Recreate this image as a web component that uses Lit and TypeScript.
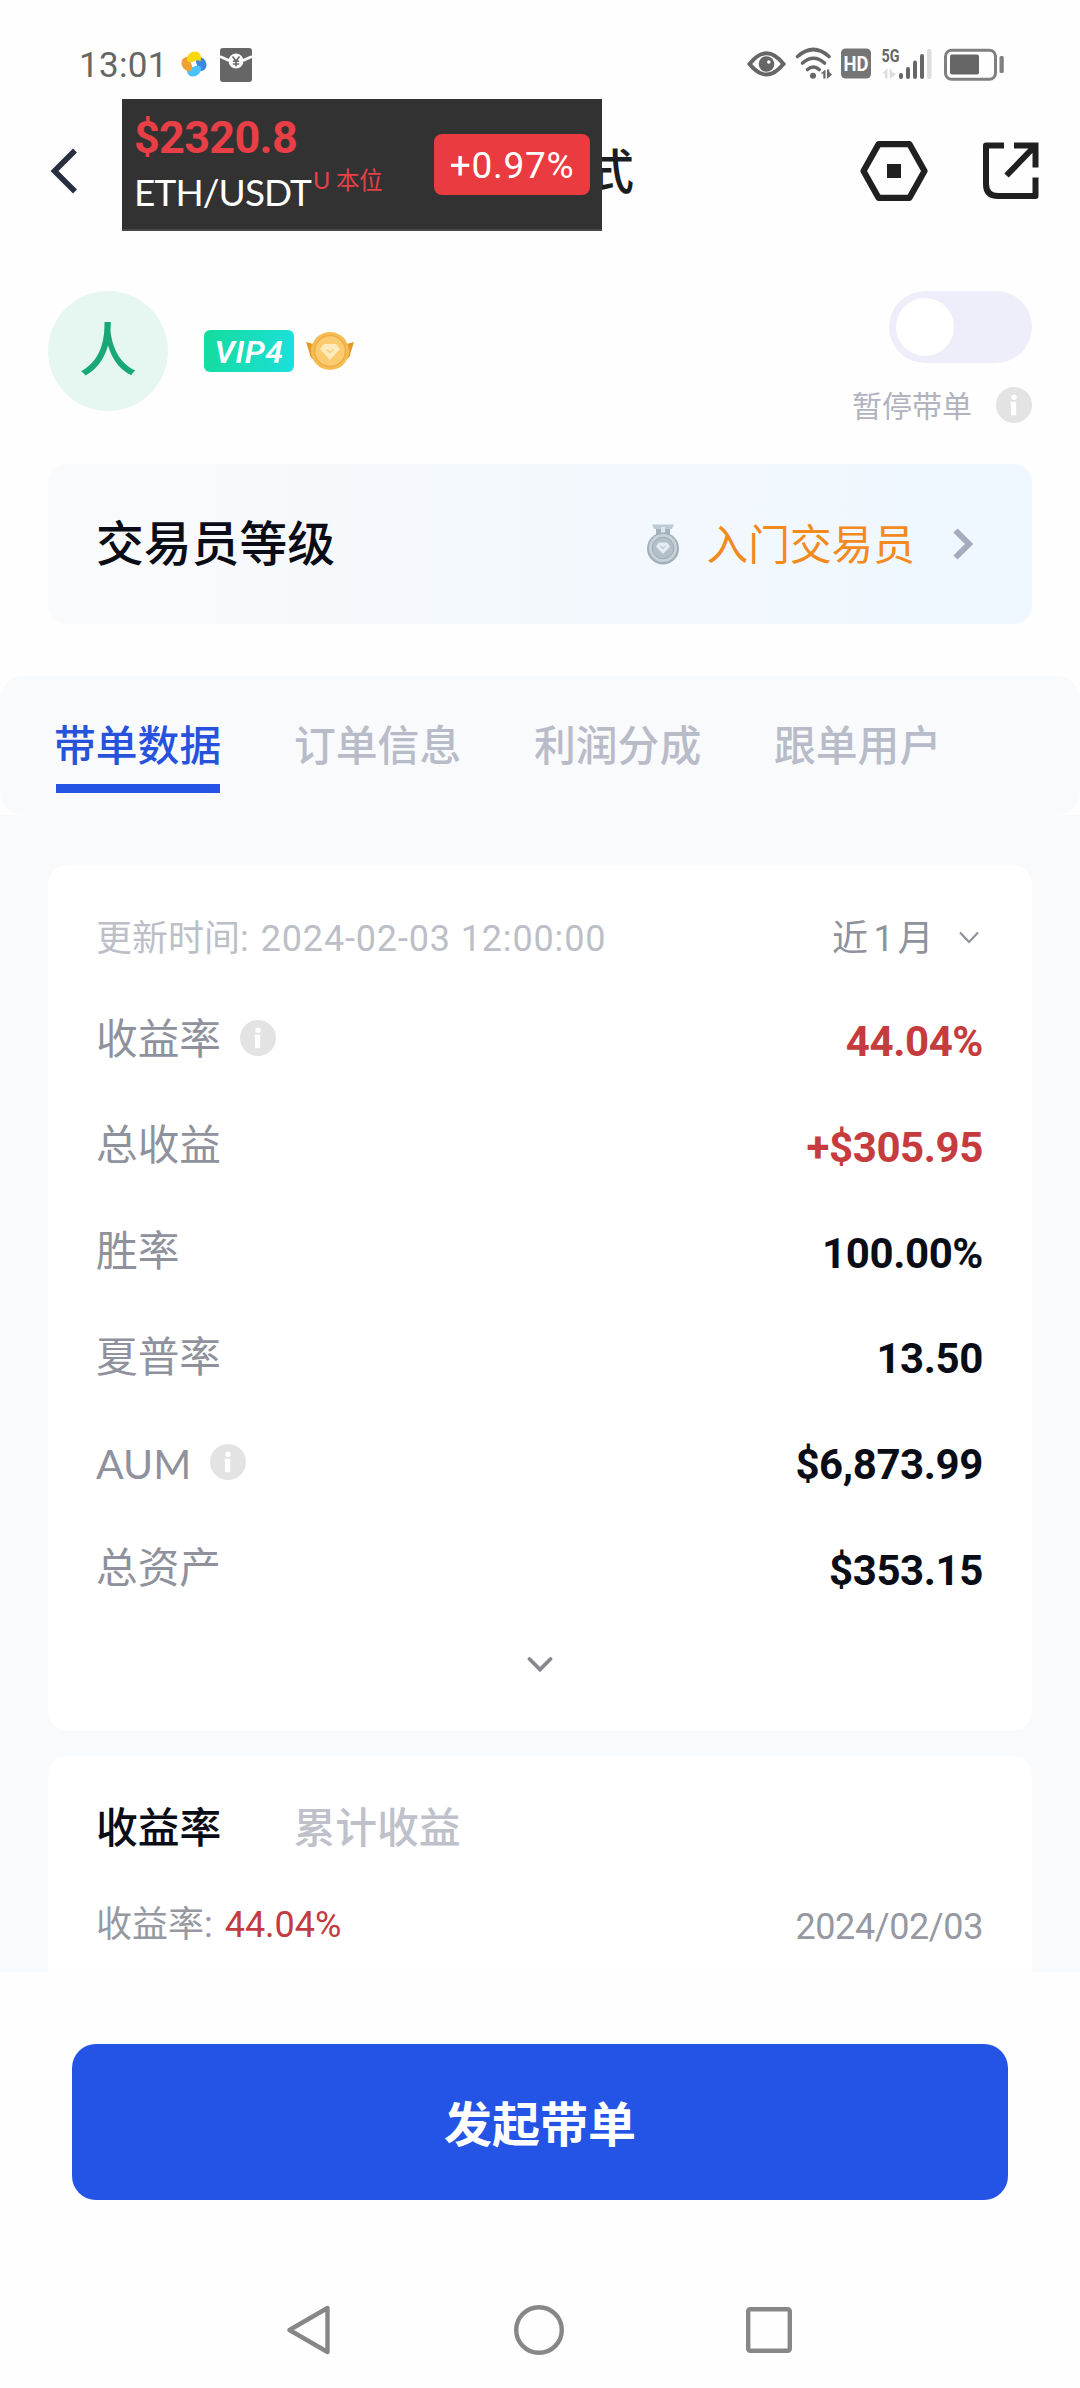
import { LitElement, html, css, svg } from "lit";
import { customElement, property } from "lit/decorators.js";

interface Metric {
  label: string;
  value: string;
  info?: boolean;
  up?: boolean;
  latin?: boolean;
}

const METRICS: Metric[] = [
  { label: "收益率", value: "44.04%", info: true, up: true },
  { label: "总收益", value: "+$305.95", up: true },
  { label: "胜率", value: "100.00%" },
  { label: "夏普率", value: "13.50" },
  { label: "AUM", value: "$6,873.99", info: true, latin: true },
  { label: "总资产", value: "$353.15" },
];

const TABS = ["带单数据", "订单信息", "利润分成", "跟单用户"];

const infoIcon = html`<svg class="info" width="36" height="36" viewBox="0 0 36 36">
  <circle cx="18" cy="18" r="18" fill="#e3e3e4" />
  <circle cx="18" cy="10.3" r="2.7" fill="#fff" />
  <path d="M14.6 14.8h5.6v13.4h-5.2V17.4h-.4z" fill="#fff" />
</svg>`;

@customElement("status-bar")
class StatusBar extends LitElement {
  static styles = css`
    :host {
      display: block;
    }
    .bar {
      display: flex;
      align-items: center;
      height: 40px;
      padding: 44px 76px 0 79px;
      color: #666;
      font-family: Roboto, "Liberation Sans", sans-serif;
    }
    .time {
      width: 101px;
      padding-top: 3px;
      font-size: 35px;
      letter-spacing: 0.3px;
    }
    .notes {
      flex: 1;
    }
    svg {
      display: block;
    }
  `;

  render() {
    const petal = (color: string, angle: number) =>
      svg`<path d="M-7 -3C-8 -8 -3.500 -12.800 1.500 -12.500C6.500 -12 8 -7.500 6.500 -2.500C4.500 -4.200 2.500 -3.800 .5 -2.800C-2 -1.600 -5 -1.200 -7 -3Z" fill=${color} transform="rotate(${angle})"/>`;
    return html`<div class="bar">
      <span class="time">13:01</span>
      <svg class="notes" height="40" viewBox="0 0 560 40" preserveAspectRatio="xMinYMid meet">
        <g transform="translate(14 20)">
          ${petal("#3c86e8", 90)} ${petal("#4cc0fb", 180)} ${petal("#f0a032", 270)} ${petal("#fbd60c", 0)}
        </g>
        <rect x="40" y="4" width="32" height="34" rx="3" fill="#666" />
        <path d="M40 12.500L49 16.500M72 12.500L63 16.500" stroke="#fff" stroke-width="3" fill="none" />
        <circle cx="56" cy="17" r="7.500" fill="#fff" />
        <path d="M52.500 12.500L56 17L59.500 12.500M56 17V22.500M52.800 17.300H59.200M52.800 20H59.200" stroke="#666" stroke-width="1.600" fill="none" />
      </svg>
      <svg width="257" height="40" viewBox="747 44 257 40" fill="none">
        <path d="M749.500 64Q766.500 42.500 783.500 64Q766.500 85 749.500 64Z" stroke="#666" stroke-width="4" />
        <circle cx="766.500" cy="64" r="7.800" fill="#666" />
        <circle cx="768.800" cy="62" r="1.800" fill="#fff" />
        <g stroke="#666" stroke-width="3.600" stroke-linecap="round">
          <path d="M797.500 56.500Q813.500 42.500 829 56.500" />
          <path d="M802.500 63Q813.500 53.500 824.500 63" />
          <path d="M807.500 69.500Q813.300 64.500 819.200 69.500" />
        </g>
        <circle cx="813" cy="75.700" r="3" fill="#666" />
        <path d="M820.500 73.500L825.500 69.500V78.500H823.300V73.500ZM827 69.500H829.200V72L832 74.500L827 79Z" fill="#666" />
        <rect x="841" y="48.500" width="30" height="30" rx="4.500" fill="#757575" />
        <text x="843.500" y="70.800" font-size="21" font-weight="700" fill="#fff" textLength="25" lengthAdjust="spacingAndGlyphs">HD</text>
        <text x="881.500" y="62" font-size="18.500" font-weight="700" fill="#666" textLength="18" lengthAdjust="spacingAndGlyphs">5G</text>
        <path d="M882 73.500L887.500 68.500V78.500H885V73.500ZM889.500 69.500H891.800V72L896 74L890 79Z" fill="#ddd" />
        <g fill="#666">
          <rect x="899" y="73" width="4" height="6" rx="2" />
          <rect x="906" y="67" width="4" height="12" rx="2" />
          <rect x="913" y="60.500" width="4" height="18.500" rx="2" />
          <rect x="920" y="54" width="4" height="25" rx="2" />
        </g>
        <rect x="927" y="49" width="4.500" height="30" rx="2" fill="#ddd" />
        <rect x="945.500" y="50.300" width="50" height="29" rx="6" stroke="#808080" stroke-width="3" />
        <rect x="950" y="54.500" width="29" height="20" rx="2" fill="#666" />
        <rect x="999.500" y="56" width="4.300" height="17" rx="1.500" fill="#808080" />
      </svg>
    </div>`;
  }
}

@customElement("metric-row")
class MetricRow extends LitElement {
  @property({ attribute: false }) metric!: Metric;

  static styles = css`
    :host {
      display: block;
    }
    .row {
      display: flex;
      align-items: center;
      height: 105.9px;
    }
    .label {
      padding-top: 4px;
      font-size: 41.7px;
      color: #8f929c;
    }
    .label.latin {
      font-family: Lato, sans-serif;
      font-size: 41px;
      letter-spacing: 0;
    }
    .info {
      margin-left: 19px;
    }
    .value {
      margin-left: auto;
      padding: 8px 1px 0 0;
      font-family: Roboto, "Liberation Sans", sans-serif;
      font-size: 42px;
      font-weight: 700;
      letter-spacing: -0.4px;
      color: #0a0c16;
    }
    .value.up {
      color: #c53b3e;
    }
  `;

  render() {
    const m = this.metric;
    return html`<div class="row">
      <span class="label ${m.latin ? "latin" : ""}">${m.label}</span>
      ${m.info ? infoIcon : ""}
      <span class="value ${m.up ? "up" : ""}">${m.value}</span>
    </div>`;
  }
}

@customElement("app-root")
class AppRoot extends LitElement {
  static styles = css`
    :host {
      display: block;
      width: 1080px;
      height: 2388px;
      overflow: hidden;
      background: #fefefe;
      font-family: Roboto, "Noto Sans CJK SC", sans-serif;
      color: #0a0c16;
      line-height: 1.2;
    }
    svg {
      display: block;
      flex: none;
    }
    .num {
      font-family: Roboto, "Liberation Sans", sans-serif;
    }

    /* Title bar with the floating price widget over it */
    .header {
      position: relative;
      display: flex;
      align-items: center;
      height: 174px;
      padding: 0 41px 0 50px;
    }
    .title {
      flex: 1;
      padding: 3px 0 0 508px;
      font-size: 48px;
      font-weight: 500;
      color: #1c1d22;
    }
    .actions {
      display: flex;
      gap: 54px;
    }
    .ticker {
      position: absolute;
      left: 122px;
      top: 15px;
      width: 480px;
      height: 132px;
      box-sizing: border-box;
      padding: 12px 12px 0 12px;
      display: flex;
      justify-content: space-between;
      background: #323232;
      border-bottom: 2px solid #484848;
    }
    .price {
      font-size: 45px;
      font-weight: 700;
      line-height: 54px;
      letter-spacing: -0.7px;
      color: #e83f46;
    }
    .pair {
      display: flex;
      line-height: 54px;
      font-family: Lato, sans-serif;
      font-size: 37px;
      color: #fff;
      letter-spacing: -0.9px;
    }
    .pair sup {
      font-family: Lato, "Noto Sans CJK SC", sans-serif;
      font-size: 23.5px;
      font-weight: 400;
      line-height: 30px;
      margin-left: 2px;
      color: #e84048;
      letter-spacing: -0.2px;
    }
    .change {
      height: 61px;
      width: 156px;
      margin-top: 23px;
      border-radius: 8px;
      background: #e93b40;
      color: #fff;
      font-size: 37px;
      line-height: 64px;
      text-align: center;
      letter-spacing: 0.7px;
    }

    /* Trader profile */
    .profile {
      display: flex;
      height: 173px;
      padding: 33px 48px 0;
    }
    .avatar {
      width: 120px;
      height: 120px;
      border-radius: 50%;
      background: #e5f7f0;
      color: #18a878;
      font-size: 58px;
      font-weight: 500;
      line-height: 121px;
      text-align: center;
    }
    .marks {
      display: flex;
      align-items: center;
      height: 120px;
      margin-left: 36px;
      gap: 12px;
    }
    .vip {
      width: 90px;
      height: 42px;
      border-radius: 6px;
      background: linear-gradient(100deg, #14dc9c, #1be0dc);
      color: #fff;
      font-size: 32px;
      font-weight: 600;
      font-style: italic;
      line-height: 44px;
      text-align: center;
      letter-spacing: 0.6px;
    }
    .pause {
      display: flex;
      flex-direction: column;
      align-items: flex-end;
      margin-left: auto;
    }
    .toggle {
      display: flex;
      align-items: center;
      width: 136px;
      height: 72px;
      padding-left: 7px;
      border-radius: 36px;
      background: #edeefa;
    }
    .knob {
      width: 58px;
      height: 58px;
      border-radius: 50%;
      background: #fff;
    }
    .pause-label {
      display: flex;
      align-items: center;
      gap: 24px;
      height: 36px;
      margin-top: 24px;
      font-size: 30px;
      color: #b1b3be;
    }
    .pause-label span {
      padding-top: 4px;
    }

    .level {
      display: flex;
      align-items: center;
      height: 160px;
      margin: 0 48px;
      padding: 0 59px 0 48px;
      border-radius: 18px;
      background: linear-gradient(90deg, #f9fafb, #eef7ff);
    }
    .level-name {
      flex: 1;
      padding-top: 4px;
      font-size: 47.8px;
      font-weight: 500;
    }
    .level-rank {
      padding-top: 4px;
      margin: 0 38px 0 27px;
      font-size: 41.7px;
      color: #f28a1e;
    }

    .tabs {
      display: flex;
      gap: 72px;
      height: 139px;
      margin-top: 52px;
      padding: 0 54px;
      border-radius: 24px;
      background: #f8fafc;
      font-size: 41.8px;
      font-weight: 500;
    }
    .tab {
      box-sizing: border-box;
      width: 168px;
      padding-top: 46px;
      color: #b8bcc8;
      white-space: nowrap;
    }
    .tab.on {
      color: #2753dc;
    }
    .tab.on::after {
      content: "";
      display: block;
      width: 164px;
      height: 9px;
      margin: 12px auto 0;
      background: #2454e4;
    }

    .panel {
      display: flex;
      flex-direction: column;
      gap: 25px;
      height: 1107px;
      padding: 50px 48px 0;
      overflow: hidden;
      background: #f8fafc;
    }
    .card {
      box-sizing: border-box;
      flex: none;
      padding: 0 48px;
      background: #fff;
      border-radius: 20px;
    }
    .stats {
      height: 866px;
      padding-top: 38px;
    }
    .updated {
      display: flex;
      align-items: center;
      height: 70px;
      margin-bottom: 12px;
      font-size: 36px;
      color: #bcbfc7;
    }
    .updated > span {
      padding-top: 4px;
    }
    .updated .num {
      letter-spacing: 0.85px;
    }
    .stamp {
      margin-left: 3px;
    }
    .period {
      margin-left: auto;
      margin-right: 25px;
      color: #8f929c;
      letter-spacing: 0.5px;
    }
    .period .num {
      margin: 0 3px 0 5px;
    }
    .period-arrow {
      margin-right: 5px;
    }
    .more {
      display: flex;
      align-items: center;
      justify-content: center;
      height: 89px;
    }
    .yield {
      height: 240px;
      padding-top: 43px;
      border-radius: 20px 20px 0 0;
    }
    .switch {
      display: flex;
      align-items: center;
      gap: 72px;
      height: 60px;
      font-size: 41.8px;
      font-weight: 500;
    }
    .muted {
      color: #bec1ca;
    }
    .summary {
      display: flex;
      align-items: center;
      justify-content: space-between;
      height: 60px;
      margin-top: 37px;
      font-size: 36px;
      color: #9699a2;
    }
    .rate {
      margin-left: 3px;
      color: #c23b42;
      letter-spacing: 0;
    }
    .date {
      padding: 3px 1px 0 0;
      letter-spacing: -0.4px;
    }

    .footer {
      padding: 72px 72px 0;
    }
    .start {
      height: 156px;
      border-radius: 24px;
      background: #2454e6;
      color: #fff;
      font-size: 48px;
      font-weight: 700;
      line-height: 163px;
      text-align: center;
    }
    .nav {
      display: flex;
      justify-content: space-between;
      align-items: center;
      height: 50px;
      padding: 105px 216px 0 214px;
    }
  `;

  render() {
    return html`
      <status-bar></status-bar>
      <div class="header">
        <svg width="28" height="48" viewBox="0 0 28 48">
          <path d="M25 3.500L4.500 24L25 44.500" fill="none" stroke="#283040" stroke-width="5.600" />
        </svg>
        <div class="title">式</div>
        <div class="actions">
          <svg width="68" height="62" viewBox="0 0 68 62">
            <path d="M18.500 4.200H49.500L64.500 31L49.500 57.800H18.500L3.500 31Z" fill="none" stroke="#202020" stroke-width="6.200" stroke-linejoin="round" />
            <rect x="27" y="24" width="14" height="14" fill="#202020" />
          </svg>
          <svg width="57" height="62" viewBox="0 0 57 62">
            <g fill="none" stroke="#202020" stroke-width="6">
              <path d="M22 5.500H4V44Q4 56 16 56H53.500V37.500" stroke-linejoin="round" />
              <path d="M32 5.500H53.500V27.500M52.500 6.500L24.500 35.500" />
            </g>
          </svg>
        </div>
        <div class="ticker">
          <div>
            <div class="price num">$2320.8</div>
            <div class="pair">ETH/USDT<sup>U 本位</sup></div>
          </div>
          <div class="change num">+0.97%</div>
        </div>
      </div>

      <div class="profile">
        <div class="avatar">人</div>
        <div class="marks">
          <div class="vip">VIP4</div>
          <svg width="48" height="40" viewBox="0 0 48 40">
            <path d="M0 11L11 14L15 30Q3 29 3.500 22Z" fill="#e59a28" />
            <path d="M48 11L37 14L33 30Q45 29 44.500 22Z" fill="#e59a28" />
            <circle cx="24" cy="20" r="19" fill="#f7bd55" />
            <circle cx="24" cy="20" r="15.500" fill="#fbcb70" stroke="#f0ac44" stroke-width="1.500" />
            <path d="M18 13H30L34 18L24 29L14 18Z" fill="#fdebbd" />
            <path d="M20.500 18.500L24 21.500L27.500 18.500" fill="none" stroke="#f5d080" stroke-width="1.600" />
          </svg>
        </div>
        <div class="pause">
          <div class="toggle"><div class="knob"></div></div>
          <div class="pause-label"><span>暂停带单</span>${infoIcon}</div>
        </div>
      </div>

      <div class="level">
        <div class="level-name">交易员等级</div>
        <svg width="34" height="42" viewBox="0 0 34 42">
          <path d="M6 1.500H28L26 6H8Z" fill="#bccbd6" />
          <path d="M10 6H24V13H10Z" fill="#a3b2be" />
          <path d="M15 4H19V12H15Z" fill="#dce6ed" />
          <circle cx="17" cy="25.500" r="16" fill="#a2aeb8" />
          <circle cx="17" cy="25" r="14" fill="#c6d1d9" />
          <circle cx="17" cy="25" r="10.800" fill="#b3c0c9" stroke="#9dabb5" stroke-width="1" />
          <path d="M13 19.500H21L24 23.500L17 31L10 23.500Z" fill="#e6edf2" />
          <path d="M14.500 23L17 25.500L19.500 23" fill="none" stroke="#bccad3" stroke-width="1.200" />
        </svg>
        <div class="level-rank">入门交易员</div>
        <svg width="20" height="32" viewBox="0 0 20 32">
          <path d="M2.500 2.500L16 16L2.500 29.500" fill="none" stroke="#a6abbd" stroke-width="6" />
        </svg>
      </div>

      <div class="tabs">
        ${TABS.map((t, i) => html`<div class="tab ${i === 0 ? "on" : ""}">${t}</div>`)}
      </div>

      <div class="panel">
        <div class="card stats">
          <div class="updated">
            <span>更新时间: <span class="num stamp">2024-02-03 12:00:00</span></span>
            <span class="period">近<span class="num">1</span>月</span>
            <svg class="period-arrow" width="20" height="14" viewBox="0 0 20 14">
              <path d="M1 1.500L10 11L19 1.500" fill="none" stroke="#8f929c" stroke-width="2.200" />
            </svg>
          </div>
          ${METRICS.map((m) => html`<metric-row .metric=${m}></metric-row>`)}
          <div class="more">
            <svg width="26" height="18" viewBox="0 0 26 18">
              <path d="M2.500 3L13 13.500L23.500 3" fill="none" stroke="#85888f" stroke-width="3.800" stroke-linecap="round" />
            </svg>
          </div>
        </div>
        <div class="card yield">
          <div class="switch"><span>收益率</span><span class="muted">累计收益</span></div>
          <div class="summary">
            <span>收益率: <span class="rate num">44.04%</span></span>
            <span class="date num">2024/02/03</span>
          </div>
        </div>
      </div>

      <div class="footer">
        <div class="start">发起带单</div>
        <div class="nav">
          <svg width="45" height="50" viewBox="0 0 45 50">
            <path d="M41.500 3V47L3.500 25Z" fill="none" stroke="#878787" stroke-width="4.400" stroke-linejoin="round" />
          </svg>
          <svg width="50" height="50" viewBox="0 0 50 50">
            <circle cx="25" cy="25" r="22.800" fill="none" stroke="#878787" stroke-width="4.400" />
          </svg>
          <svg width="46" height="46" viewBox="0 0 46 46">
            <rect x="2.200" y="2.200" width="41.600" height="41.600" rx="2" fill="none" stroke="#878787" stroke-width="4.400" />
          </svg>
        </div>
      </div>
    `;
  }
}
